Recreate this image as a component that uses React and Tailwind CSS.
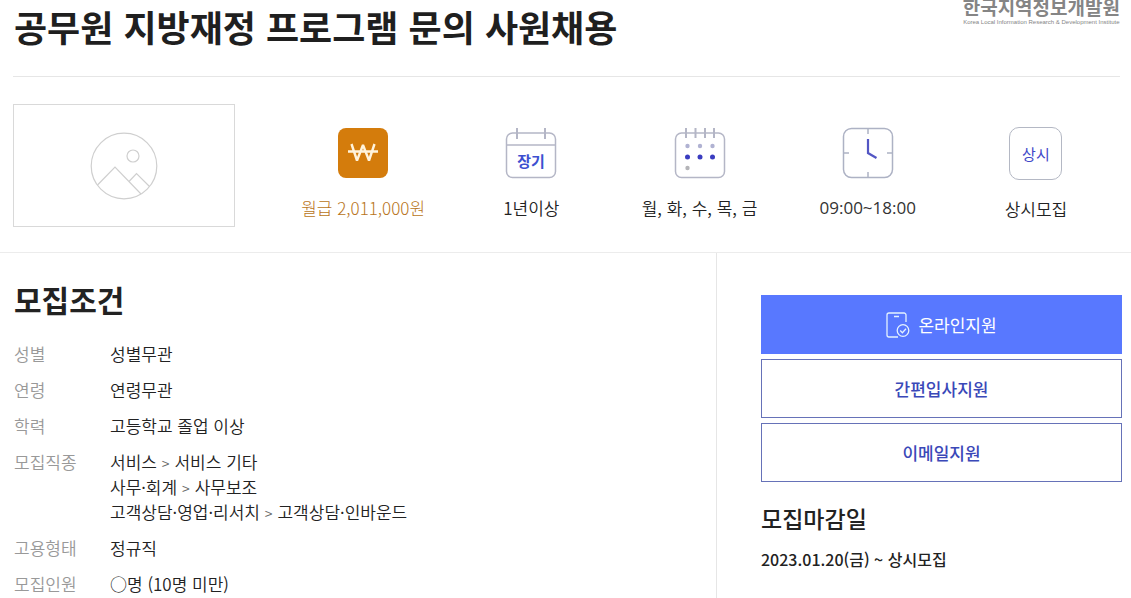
import { Fragment } from "react";

const summary = [
  { icon: <PayIcon />, label: "월급 2,011,000원", style: "font-light text-[#b87420]" },
  { icon: <TermIcon />, label: "1년이상", style: "font-[350] text-[#222]" },
  { icon: <DaysIcon />, label: "월, 화, 수, 목, 금", style: "font-[350] text-[#222]" },
  { icon: <ClockIcon />, label: "09:00~18:00", style: "font-['Open_Sans','Noto_Sans',sans-serif] font-normal text-[#333]" },
  { icon: <AlwaysIcon />, label: "상시모집", style: "font-[350] text-[#222]" },
];

const conditions = [
  { name: "성별", values: [["성별무관"]] },
  { name: "연령", values: [["연령무관"]] },
  { name: "학력", values: [["고등학교 졸업 이상"]] },
  {
    name: "모집직종",
    values: [
      ["서비스", "서비스 기타"],
      ["사무·회계", "사무보조"],
      ["고객상담·영업·리서치", "고객상담·인바운드"],
    ],
  },
  { name: "고용형태", values: [["정규직"]] },
  { name: "모집인원", values: [["○명 (10명 미만)"]] },
];

function PayIcon() {
  return (
    <svg width="52" height="52" viewBox="0 0 52 52" fill="none" aria-hidden="true">
      <rect x="1" y="1" width="50" height="50" rx="8" fill="#d47c0c" />
      <path
        d="M14.500 17l5.500 16.500L26 18l6 15.500L37.500 17M11 24.500h30"
        stroke="#fff3dc"
        strokeWidth="2.400"
        strokeLinejoin="bevel"
      />
    </svg>
  );
}

function TermIcon() {
  return (
    <svg width="52" height="52" viewBox="0 0 52 52" fill="none" stroke="#b4b6c6" strokeWidth="1.500" aria-hidden="true">
      <rect x="1.500" y="6" width="49" height="44.500" rx="6" />
      <path d="M2 18h48" />
      <path d="M12 1v11M40 1v11" strokeWidth="2" />
      <text
        x="26"
        y="40"
        textAnchor="middle"
        stroke="none"
        fill="#3d50d0"
        className="text-[15px] font-bold"
      >
        장기
      </text>
    </svg>
  );
}

function DaysIcon() {
  return (
    <svg width="52" height="52" viewBox="0 0 52 52" fill="none" stroke="#b4b6c6" strokeWidth="1.500" aria-hidden="true">
      <rect x="1.500" y="6" width="49" height="44.500" rx="6" />
      <path d="M12 1v10M21.500 1v10M31 1v10M40 1v10" strokeWidth="2" />
      <g stroke="none" fill="#b0b2d2">
        <circle cx="13.500" cy="19" r="2.200" />
        <circle cx="26" cy="19" r="2.200" />
        <circle cx="38.500" cy="19" r="2.200" />
        <circle cx="13.500" cy="41" r="2.200" fill="#b4b4b8" />
      </g>
      <g stroke="none" fill="#3a3cc0">
        <circle cx="13.500" cy="30" r="2.500" />
        <circle cx="26" cy="30" r="2.500" />
        <circle cx="38.500" cy="30" r="2.500" />
      </g>
    </svg>
  );
}

function ClockIcon() {
  return (
    <svg width="52" height="52" viewBox="0 0 52 52" fill="none" stroke="#adb2c4" strokeWidth="1.500" aria-hidden="true">
      <rect x="1.500" y="1.500" width="49" height="49" rx="8" />
      <path d="M26 2v5M26 45v5M2 26h5M45 26h5" />
      <path d="M26 12v14l8.500 5" stroke="#5356c4" strokeWidth="2.200" />
    </svg>
  );
}

function AlwaysIcon() {
  return (
    <span className="flex size-[53px] items-center justify-center rounded-[10px] border border-[#b4b8c4] text-[15px] leading-none text-[#4048c8]">
      상시
    </span>
  );
}

function PhoneCheckIcon() {
  return (
    <svg width="24" height="26" viewBox="0 0 24 26" fill="none" stroke="#e4f2ff" strokeWidth="1.300" aria-hidden="true">
      <path d="M20 10V3a2 2 0 0 0-2-2H3a2 2 0 0 0-2 2v20a2 2 0 0 0 2 2h9M8 4.500h5" />
      <circle cx="17" cy="18.500" r="5.800" />
      <path d="M14.200 18.500l2.200 2.200 3.600-4" />
    </svg>
  );
}

function NoImage() {
  return (
    <div className="flex h-[123px] w-[222px] shrink-0 items-center justify-center border border-[#d9d9d9]">
      <svg width="68" height="68" viewBox="0 0 68 68" fill="none" stroke="#cfcfcf" strokeWidth="1.200" role="img" aria-label="이미지 없음">
        <circle cx="34" cy="34" r="32.800" />
        <circle cx="43" cy="24" r="6" />
        <path d="M7.500 53L25 35l26 27M39 49.500l7.500-8L59.500 54.500" />
      </svg>
    </div>
  );
}

export default function App() {
  return (
    <div className="flex min-h-screen flex-col overflow-hidden bg-white font-['Noto_Sans_CJK_KR','Noto_Sans',sans-serif] text-[17px] text-[#222]" lang="ko">
      <div className="border-b border-[#ececec] pr-[11px] pl-[13px]">
        <header className="flex h-[77px] items-start justify-between border-b border-[#e6e6e6] pl-px">
          <h1 className="text-4xl leading-[52px] font-bold text-[#1f1f1f]">
            공무원 지방재정 프로그램 문의 사원채용
          </h1>
          <div className="-mt-1 flex shrink-0 flex-col items-center text-[#858585]">
            <strong className="text-[19px] leading-[22px] font-bold">한국지역정보개발원</strong>
            <span className="font-['Liberation_Sans',sans-serif] text-[6px] leading-[8px]">
              Korea Local Information Research &amp; Development Institute
            </span>
          </div>
        </header>

        <section className="flex items-start gap-11 pt-[27px] pb-[25px]">
          <NoImage />
          <ul className="flex flex-1 pt-[23px]">
            {summary.map((item) => (
              <li key={item.label} className="flex flex-1 flex-col items-center gap-4">
                {item.icon}
                <span className={`leading-[25px] whitespace-nowrap ${item.style}`}>{item.label}</span>
              </li>
            ))}
          </ul>
        </section>
      </div>

      <div className="flex flex-1">
        <main className="flex-1 pt-[26px] pl-[14px]">
          <h2 className="text-3xl leading-10 font-bold">모집조건</h2>
          <dl className="mt-[22px] flex flex-col gap-[11px] font-[350]">
            {conditions.map((row) => (
              <div key={row.name} className="flex leading-[25px]">
                <dt className="w-24 shrink-0 text-[#999]">{row.name}</dt>
                <dd>
                  {row.values.map((path) => (
                    <p key={path.join()}>
                      {path.map((part, i) => (
                        <Fragment key={part}>
                          {i > 0 && <span className="mx-px text-sm leading-none text-[#666]"> &gt; </span>}
                          {part}
                        </Fragment>
                      ))}
                    </p>
                  ))}
                </dd>
              </div>
            ))}
          </dl>
        </main>

        <aside className="w-[415px] shrink-0 border-l border-[#e6e6e6] pt-[42px] pr-[9px] pl-11">
          <div className="flex flex-col gap-[5px] font-medium text-[#3a48b8]">
            <button className="flex h-[59px] items-center justify-center gap-2 bg-[#5878ff] font-normal text-white">
              <PhoneCheckIcon />
              온라인지원
            </button>
            <button className="h-[59px] border border-[#6672b8]">간편입사지원</button>
            <button className="h-[59px] border border-[#6672b8]">이메일지원</button>
          </div>
          <h3 className="mt-[19px] text-[23px] leading-[34px] font-medium">모집마감일</h3>
          <p className="mt-3 text-base leading-[25px] font-medium">2023.01.20(금) ~ 상시모집</p>
        </aside>
      </div>
    </div>
  );
}
